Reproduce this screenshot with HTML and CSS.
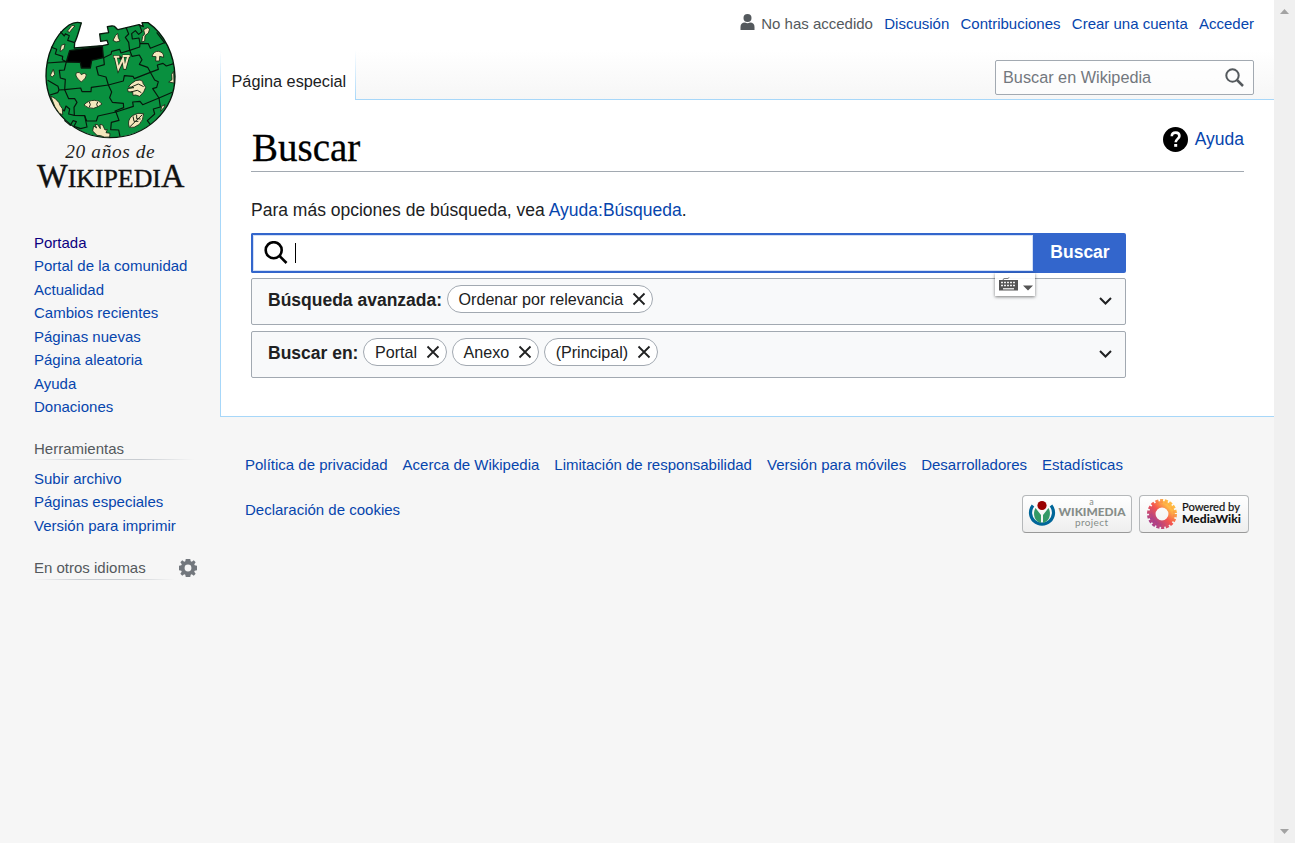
FILE: index.html
```html
<!DOCTYPE html>
<html lang="es">
<head>
<meta charset="utf-8">
<title>Buscar - Wikipedia</title>
<link rel="stylesheet" href="styles.css">
</head>
<body>
<div class="page">
  <aside class="sidebar">
    <a class="logo"><svg width="170" height="190" viewBox="0 0 510 570">
      <g stroke="#07180c" stroke-width="4" stroke-linejoin="round">
        <path fill="#09903f" d="M154 39C142 35 130 37 117 45C72 77 48 138 48 199C50 302 135 383 240 383C348 383 435 302 435 199C433 135 405 73 354 38L336 38L340 50L327 44L264 59C257 57 258 46 245 48L232 50L236 68L209 72L212 94L231 91L235 103L218 107L133 114L134 98C143 80 147 60 154 39Z"/>
        <path fill="#000" d="M119 122L217 108L220 143L185 151L181 174H154L151 157L109 156Z"/>
        <g fill="none" stroke-width="3.500">
          <path d="M91 65L103 78L106 71L118 77L113 91L134 98"/>
          <path d="M63 111L80 118L76 132L98 139L97 149L109 155L51 159"/>
          <path d="M109 155L103 180L88 181L91 204L106 208L104 239L87 240L84 229L53 211"/>
          <path d="M104 239L152 234L156 245H183L184 232L235 225L228 201L205 195L199 171L223 164L221 143"/>
          <path d="M221 143L243 133L245 124L269 118L273 129L299 121L296 97L286 82L296 72L288 52"/>
          <path d="M299 121L329 111L330 100L355 101L361 115L403 98"/>
          <path d="M299 121L306 139L328 135L336 149L328 163L353 172L361 187L385 178L382 165L399 160L409 168L431 161"/>
          <path d="M235 225L280 213L283 197L309 199L313 206L361 187L374 210L385 215L380 232L368 236L387 264L427 247"/>
          <path d="M235 225L245 246L239 263L247 277L280 280L281 293L255 303L258 306L310 289L308 276L330 274L338 284L387 264"/>
          <path d="M104 239L116 266L134 266L141 277L132 292L133 316L164 317L170 333H199L204 318L258 306"/>
          <path d="M60 255L83 248L87 240M80 286L103 303L108 288L119 297L116 312L133 316"/>
          <path d="M103 331L121 346L129 332L139 335L132 349L152 356L171 351L164 317"/>
          <path d="M258 306L267 331L244 337L242 359L266 360L270 380"/>
          <path d="M387 264L391 291L370 297L374 312L352 332L361 344"/>
          <path d="M328 44L336 65L326 73L316 62L305 71L307 87L327 84L330 100M405 100L380 67"/>
        </g>
      </g>
      <path d="M249 140H269M277 138H301M256 141L265 178L279 148L284 178L295 140M266 140L281 150" fill="none" stroke="#172413" stroke-width="9"/>
      <path d="M251 140H268M278 138H299M257 141L265 176L279 146L284 176L294 140" fill="none" stroke="#f4e7bd" stroke-width="6"/>
      <g fill="#f4e7bd" stroke="#172413" stroke-width="2.500" stroke-linejoin="round">
        <path d="M154 216C141 205 134 196 140 188Q149 184 154 194Q165 186 169 195Q170 203 154 216Z"/>
        <path d="M366 139Q371 123 386 124Q402 127 401 142L389 139L388 153H377L378 140Z"/>
        <path d="M162 285Q174 271 193 271Q207 270 216 282Q208 290 191 295Q173 296 162 285Z"/>
        <path d="M295 230Q304 219 317 212L330 210Q341 213 339 220L347 232L341 246L329 259L317 255L309 256L308 246L294 245L293 236L312 233Z"/>
        <path d="M298 352Q290 331 307 317Q323 306 341 311Q340 331 328 343Q312 356 298 352Z"/>
        <path d="M191 348L200 354L195 343L203 344L211 356L210 343L218 345L225 360L232 358L228 368L240 370L239 381Q222 384 212 377L201 376L188 363Z"/>
        <path d="M62 258L76 266L87 278L90 286L97 296L98 314L88 310L75 291Z"/>
        <path d="M249 91L257 76L263 70L265 83L270 93L258 96Z"/>
        <path d="M341 59L353 53L359 57L355 69L345 77L344 93L335 96L338 79L344 72Z"/>
        <path d="M112 64L126 46L135 48L127 56L119 67Z"/>
        <path d="M90 124L94 106L105 102L102 115L94 123Z"/>
        <path d="M61 196L70 178L74 193L67 201Z"/>
        <path d="M431 184L432 219L416 216L426 209L425 193Z"/>
        <path d="M392 304L395 289L405 284L402 292Z"/>
      </g>
      <g fill="none" stroke="#172413" stroke-width="3"><path d="M178 276Q184 284 178 291M203 276Q197 284 203 290M300 350L337 314M309 319L312 334L325 334M320 314V326L332 327M304 231L325 222L341 230M302 246L322 241L334 248"/></g>
      <text class="logo-sub" x="106" y="443" textLength="268">20 años de</text>
      <text class="logo-name" x="21" y="530" textLength="442" lengthAdjust="spacingAndGlyphs"><tspan font-size="98">W</tspan>IKIPEDI<tspan font-size="98">A</tspan></text>
    </svg></a>
    <nav class="menu">
      <a class="visited">Portada</a><a>Portal de la comunidad</a><a>Actualidad</a><a>Cambios recientes</a><a>Páginas nuevas</a><a>Página aleatoria</a><a>Ayuda</a><a>Donaciones</a>
    </nav>
    <h3 class="menu-title">Herramientas</h3>
    <nav class="menu tools"><a>Subir archivo</a><a>Páginas especiales</a><a>Versión para imprimir</a></nav>
    <div class="languages">
      <h3 class="menu-title">En otros idiomas</h3>
      <svg width="18" height="18" viewBox="0 0 20 20"><path fill="#72777d" fill-rule="evenodd" d="M7.500 0h5l.5 2.600 1.200.5L16.400 1.500 18.500 3.600 17 5.800l.4 1.200 2.600.5v5l-2.600.5-.5 1.200 1.600 2.200-2.100 2.100-2.200-1.500-1.200.4-.5 2.600h-5l-.5-2.600-1.200-.5-2.200 1.600-2.100-2.100 1.500-2.200-.4-1.200L0 12.500v-5L2.600 7l.5-1.200L1.500 3.600l2.100-2.100L5.800 3 7 2.600zM10 6.200a3.800 3.800 0 1 0 0 7.600 3.800 3.800 0 0 0 0-7.600z"/></svg>
    </div>
  </aside>
  <div class="main">
    <header class="head">
      <div class="personal">
        <span class="anon"><svg width="15" height="17" viewBox="0 0 15 17"><g fill="#54595d"><circle cx="7.500" cy="4" r="4"/><path d="M.5 16v-3q0-4.500 4.500-4.500 2.500 1.300 5 0 4.500 0 4.500 4.500v3z"/></g></svg>No has accedido</span>
        <a>Discusión</a><a>Contribuciones</a><a>Crear una cuenta</a><a>Acceder</a>
      </div>
      <div class="nav-row">
        <div class="tab">Página especial</div>
        <div class="quick-search"><span>Buscar en Wikipedia</span><svg width="19" height="19" viewBox="0 0 19 19" fill="none" stroke="#54595d" stroke-width="2"><circle cx="7.500" cy="7.500" r="6.200"/><path d="M12 12l6 6" stroke-width="2.500"/></svg></div>
      </div>
    </header>
    <main class="content">
      <div class="title-row">
        <h1>Buscar</h1>
        <a class="help"><svg width="25" height="25" viewBox="0 0 25 25"><circle cx="12.500" cy="12.500" r="12.500"/><path d="M8.800 9.300q0-3.700 3.900-3.700 3.700 0 3.700 3.400c0 2.800-3.700 3-3.700 6.200" fill="none" stroke="#fff" stroke-width="2.600"/><path fill="#fff" d="M11.200 17h3v2.800h-3z"/></svg>Ayuda</a>
      </div>
      <p class="intro">Para más opciones de búsqueda, vea <a>Ayuda:Búsqueda</a>.</p>
      <div class="search">
        <div class="field"><svg width="24" height="24" viewBox="0 0 24 24" fill="none" stroke="#000" stroke-width="2.600"><circle cx="9.700" cy="9.200" r="8"/><path d="M15.200 14.700l7.300 7.300"/></svg><i class="caret"></i></div>
        <div class="submit">Buscar</div>
        <div class="keyboard"><svg width="34" height="15" viewBox="0 0 34 15"><path d="M4 3q0-2 3-1.500t3-1.200" fill="none" stroke="#777"/><path fill="#555" d="M0 3h19v10.500H0zM24 8.500h10l-5 5z"/><path d="M2 5.500h15M2 8.500h15" stroke="#eee" stroke-width="1.600" stroke-dasharray="2 1"/><path fill="#ddd" d="M4 11h11v1.500H4z"/></svg></div>
      </div>
      <div class="panel">
        <b>Búsqueda avanzada:</b>
        <span class="pill">Ordenar por relevancia<svg class="x" viewBox="0 0 14 14"><path d="M1.500 1.500l11 11M12.500 1.500l-11 11"/></svg></span>
        <svg class="chevron" viewBox="0 0 13 8"><path d="M1 1l5.500 5.500L12 1"/></svg>
      </div>
      <div class="panel">
        <b>Buscar en:</b>
        <span class="pill">Portal<svg class="x" viewBox="0 0 14 14"><path d="M1.500 1.500l11 11M12.500 1.500l-11 11"/></svg></span>
        <span class="pill">Anexo<svg class="x" viewBox="0 0 14 14"><path d="M1.500 1.500l11 11M12.500 1.500l-11 11"/></svg></span>
        <span class="pill">(Principal)<svg class="x" viewBox="0 0 14 14"><path d="M1.500 1.500l11 11M12.500 1.500l-11 11"/></svg></span>
        <svg class="chevron" viewBox="0 0 13 8"><path d="M1 1l5.500 5.500L12 1"/></svg>
      </div>
    </main>
    <footer class="footer">
      <div class="links"><a>Política de privacidad</a><a>Acerca de Wikipedia</a><a>Limitación de responsabilidad</a><a>Versión para móviles</a><a>Desarrolladores</a><a>Estadísticas</a></div>
      <div class="second">
        <a>Declaración de cookies</a>
        <div class="badges">
          <div class="badge"><svg width="108" height="36" viewBox="0 0 108 36">
            <path d="M10 9.500A11.500 11.500 0 1 0 28 9.500" fill="none" stroke="#069" stroke-width="3.200"/>
            <path fill="#396" d="M12.500 12C9 18 12 26 18 27V19zM25.500 12C29 18 26 26 20 27V19z"/>
            <circle cx="19" cy="9.500" r="4.600" fill="#900"/>
            <g fill="#868d89" font-family="Lato" text-anchor="middle"><text x="68.500" y="9" font-size="9">a</text><text x="69" y="20" font-size="10.500" font-weight="900" textLength="67" lengthAdjust="spacingAndGlyphs">WIKIMEDIA</text><text x="68.500" y="30" font-size="10" textLength="33">project</text></g>
          </svg></div>
          <div class="badge"><svg width="108" height="36" viewBox="0 0 108 36">
            <defs><linearGradient id="sun" x1="1" y1="0" x2="0" y2="1"><stop offset=".15" stop-color="#fb4"/><stop offset=".5" stop-color="#f4554f"/><stop offset=".9" stop-color="#a8408c"/></linearGradient></defs>
            <circle cx="22" cy="18" r="9.700" fill="none" stroke="url(#sun)" stroke-width="6.500"/>
            <circle cx="22" cy="18" r="13" fill="none" stroke="url(#sun)" stroke-width="4" stroke-dasharray="3 1.538"/>
            <g fill="#111" font-family="Lato"><text x="42" y="15" font-size="11" stroke="#111" stroke-width=".2" textLength="58" lengthAdjust="spacingAndGlyphs">Powered by</text><text x="42" y="27" font-size="11.500" font-weight="900" textLength="59" lengthAdjust="spacingAndGlyphs">MediaWiki</text></g>
          </svg></div>
        </div>
      </div>
    </footer>
  </div>
</div>
<div class="scrollbar"><svg width="9" height="5" viewBox="0 0 9 5"><path fill="#a3a3a3" d="M0 5l4.500-5L9 5z"/></svg><svg width="9" height="5" viewBox="0 0 9 5"><path fill="#a3a3a3" d="M0 0h9L4.500 5z"/></svg></div>
</body>
</html>
```
FILE: styles.css
```css
* { box-sizing: border-box; }
body {
  margin: 0;
  height: 843px;
  display: flex;
  overflow: hidden;
  font: 15px "Liberation Sans", Arial, sans-serif;
  color: #202122;
  background: #f6f6f6;
}
svg { display: block; flex: none; }
a { color: #0645ad; white-space: nowrap; }
.visited { color: #0b0080; }

.page {
  flex: 1;
  display: grid;
  grid-template-columns: 220px 1fr;
  background: linear-gradient(#fff 50%, #f6f6f6) 0 0 / 100% 100px no-repeat;
}
.scrollbar {
  width: 21px;
  background: #f0f0f0;
  display: flex;
  flex-direction: column;
  justify-content: space-between;
  padding: 9px 0 9px 6px;
}

.sidebar { padding: 10px 20px 0 34px; }
.logo { display: block; margin: 0 -4px; height: 221px; }
.logo-sub { font: italic 58px "Liberation Serif", serif; fill: #222; }
.logo-name { font: 78px "Liberation Serif", serif; fill: #111; stroke: #111; stroke-width: 1.200; }
.menu { display: flex; flex-direction: column; height: 187.500px; }
.menu a { height: 23.440px; line-height: 23.440px; }
.menu-title {
  margin: 18px 0 0;
  height: 23px;
  font: 15px/23px "Liberation Sans", Arial, sans-serif;
  color: #54595d;
  background: linear-gradient(to right, rgba(200, 204, 209, 0), #c8ccd1 33%, #c8ccd1 66%, rgba(200, 204, 209, 0)) 0 100% / 100% 1px no-repeat;
  width: 160px;
}
.tools { margin-top: 7px; height: 72px; }
.tools a { height: 23.600px; line-height: 23.600px; }
.languages { display: flex; align-items: flex-end; gap: 4px; }
.languages .menu-title { width: 141px; line-height: 22px; }
.languages svg { margin-bottom: 3px; }

.head { height: 100px; display: flex; flex-direction: column; justify-content: space-between; }
.personal { display: flex; justify-content: flex-end; gap: 11.250px; padding: 14px 20px 0 0; line-height: 20px; }
.anon { display: flex; gap: 6px; color: #54595d; }
.nav-row { display: flex; justify-content: space-between; height: 50px; background: linear-gradient(#a7d7f9, #a7d7f9) 0 100% / 100% 1px no-repeat; }
.tab {
  width: 136px;
  padding: 19px 0 0 11.500px;
  font-size: 16.250px;
  line-height: 24px;
  background:
    linear-gradient(#fff, #a7d7f9) 0 0 / 1px 100% no-repeat,
    linear-gradient(#fff, #a7d7f9) 100% 0 / 1px 100% no-repeat,
    #fff;
}
.quick-search {
  width: 259px;
  height: 35px;
  margin: 10px 20px 0 0;
  padding: 0 9px 0 7px;
  display: flex;
  align-items: center;
  justify-content: space-between;
  border: 1px solid #a2a9b1;
  border-radius: 2px;
  background: rgba(255, 255, 255, .5);
  font-size: 16.250px;
  color: #72777d;
}

.content {
  height: 317px;
  padding: 25px 30px 0;
  border: solid #a7d7f9;
  border-width: 0 0 1px 1px;
  background: #fff;
  font-size: 17.500px;
}
.title-row { display: flex; justify-content: space-between; height: 47px; border-bottom: 1px solid #a2a9b1; }
h1 { margin: 0 0 0 1px; font: 39px/46px "Liberation Serif", serif; color: #000; -webkit-text-stroke: .3px #000; }
.help { display: flex; gap: 7px; line-height: 25px; padding-top: 2px; }
.intro { margin: 28px 0 13px; line-height: 20px; }
.search { position: relative; display: flex; width: 875px; height: 40px; }
.field {
  flex: 1;
  display: flex;
  gap: 7px;
  padding: 6px 0 0 11px;
  border: 2px solid #36c;
  border-right-width: 0;
  border-radius: 2px 0 0 2px;
  box-shadow: inset 0 0 0 1px #d3dff5;
}
.caret { width: 1px; height: 20px; margin-top: 2px; background: #000; }
.submit { width: 93px; padding-left: 1px; background: #36c; border-radius: 0 2px 2px 0; color: #fff; font-size: 17.500px; font-weight: bold; line-height: 38px; text-align: center; }
.keyboard {
  position: absolute;
  left: 744px;
  top: 40px;
  width: 40px;
  height: 23px;
  padding: 4px 0 0 4px;
  background: rgba(255, 255, 255, .9);
  box-shadow: 0 1px 3px rgba(0, 0, 0, .5);
}
.panel {
  width: 875px;
  height: 47px;
  margin-top: 5px;
  padding: 6px 13px 0 16px;
  display: flex;
  align-items: flex-start;
  gap: 5px;
  border: 1px solid #a2a9b1;
  border-radius: 2px;
  background: #f8f9fa;
}
.panel + .panel { margin-top: 6px; }
.panel b { line-height: 30px; }
.pill {
  height: 28px;
  display: flex;
  align-items: center;
  gap: 9px;
  padding: 0 6px 0 10.500px;
  border: 1px solid #a2a9b1;
  border-radius: 14px;
  background: #fff;
  font-size: 16.100px;
}
.x { width: 14px; height: 14px; fill: none; stroke: #202122; stroke-width: 1.800; }
.chevron { width: 13px; height: 8px; margin: 12px 0 0 auto; fill: none; stroke: #202122; stroke-width: 2; }

.footer { padding: 38px 25px 0; }
.links { display: flex; gap: 15px; line-height: 20px; }
.second { display: flex; justify-content: space-between; margin-top: 20px; line-height: 30px; }
.badges { display: flex; gap: 7px; }
.badge { width: 110px; height: 38px; border: 1px solid #b5b8ba; border-bottom-color: #999; border-radius: 4px; background: linear-gradient(#fff, #eee); }
```
